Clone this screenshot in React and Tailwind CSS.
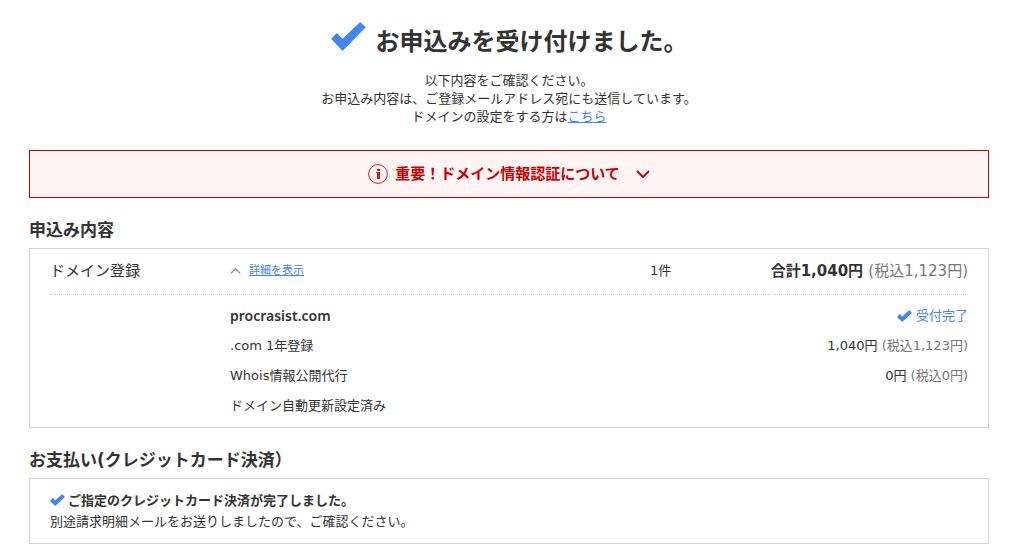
import React, { useState } from "react";

const orderItems = [
  { name: ".com 1年登録", price: "1,040円", taxPrice: "(税込1,123円)" },
  { name: "Whois情報公開代行", price: "0円", taxPrice: "(税込0円)" },
  { name: "ドメイン自動更新設定済み" },
];

const CheckIcon = ({ className }) => (
  <svg
    viewBox="0 0 104 87"
    className={className}
    fill="#4285f4"
    aria-hidden="true"
  >
    <path d="M0 50 17 33 34 50 87 0 104 16 34 87Z" />
  </svg>
);

// heavier tick, used next to small text
const SmallCheckIcon = () => (
  <svg
    viewBox="0 0 15 12"
    className="h-3 w-[15px] shrink-0"
    fill="none"
    stroke="#4285f4"
    strokeWidth="4"
    aria-hidden="true"
  >
    <path d="M1.400 5.500 5.200 9.200 13.600 1.600" />
  </svg>
);

const InfoIcon = () => (
  <svg
    viewBox="0 0 20 20"
    className="h-5 w-5 shrink-0"
    fill="none"
    aria-hidden="true"
  >
    <circle cx="10" cy="10" r="9.4" stroke="#cc1f1f" strokeWidth="1" />
    <path d="M9 5h3v2H9zM8 8h4v7H9V9H8z" fill="#cc1f1f" />
  </svg>
);

const ChevronIcon = ({ className }) => (
  <svg
    viewBox="0 0 14 8"
    className={className}
    fill="none"
    stroke="currentColor"
    strokeWidth="2"
    aria-hidden="true"
  >
    <path d="M1 1l6 6 6-6" />
  </svg>
);

const SectionTitle = ({ children }) => (
  <h2 className="mb-1.5 text-[17px] leading-6 font-bold">{children}</h2>
);

const App = () => {
  const [showDetail, setShowDetail] = useState(true);

  return (
    <main className="bg-white px-[29px] pt-[22px] pb-3 font-['DejaVu_Sans','Noto_Sans_CJK_JP',sans-serif] text-[13px] leading-[18px] text-[#333]">
      <div className="flex items-start justify-center gap-2.5">
        <CheckIcon className="h-[29px] w-[35px]" />
        <h1 className="text-2xl leading-10 font-bold">
          お申込みを受け付けました。
        </h1>
      </div>

      <p className="mt-2.5 text-center">
        以下内容をご確認ください。
        <br />
        お申込み内容は、ご登録メールアドレス宛にも送信しています。
        <br />
        ドメインの設定をする方は
        <a href="#domain" className="text-[#4285f4] underline">
          こちら
        </a>
      </p>

      <button
        type="button"
        className="mt-6 flex h-12 w-full items-center justify-center border border-[#c00] bg-[#fff5f5] text-[15px] font-bold text-[#c00]"
      >
        <InfoIcon />
        <span className="ml-[7px]">重要！ドメイン情報認証について</span>
        <ChevronIcon className="ml-4 h-2 w-3.5" />
      </button>

      <section className="mt-5">
        <SectionTitle>申込み内容</SectionTitle>
        <div className="border border-[#d3d3d3] px-5 pb-1.5">
          <table className="w-full">
            <thead>
              <tr className="h-[45px] border-b border-dotted border-[#ccc] text-left">
                <th className="w-[180px] text-[15px] font-normal">
                  ドメイン登録
                </th>
                <th className="font-normal">
                  <button
                    type="button"
                    onClick={() => setShowDetail(!showDetail)}
                    className="flex items-center gap-2 text-[11px] text-[#4285f4]"
                  >
                    <ChevronIcon className="h-1.5 w-[11px] rotate-180 text-[#999]" />
                    <span className="underline">詳細を表示</span>
                  </button>
                </th>
                <th className="w-[118px] font-normal">1件</th>
                <th className="w-[200px] text-right text-[15px] font-bold">
                  合計1,040円{" "}
                  <span className="font-normal text-[#777]">
                    (税込1,123円)
                  </span>
                </th>
              </tr>
            </thead>
            {showDetail && (
              <tbody className="before:block before:h-1.5">
                <tr className="h-[30px]">
                  <td />
                  <td className="font-['Noto_Sans'] text-sm font-semibold">
                    procrasist.com
                  </td>
                  <td colSpan={2}>
                    <div className="flex items-center justify-end gap-1 text-[#4285f4]">
                      <SmallCheckIcon />
                      受付完了
                    </div>
                  </td>
                </tr>
                {orderItems.map((item) => (
                  <tr key={item.name} className="h-[30px]">
                    <td />
                    <td>{item.name}</td>
                    <td colSpan={2} className="text-right">
                      {item.price}{" "}
                      <span className="text-[#777]">{item.taxPrice}</span>
                    </td>
                  </tr>
                ))}
              </tbody>
            )}
          </table>
        </div>
      </section>

      <section className="mt-5">
        <SectionTitle>お支払い(クレジットカード決済）</SectionTitle>
        <div className="border border-[#d3d3d3] px-5 py-[11px] leading-[21px]">
          <p className="flex items-center gap-[3px] font-bold">
            <SmallCheckIcon />
            ご指定のクレジットカード決済が完了しました。
          </p>
          <p>別途請求明細メールをお送りしましたので、ご確認ください。</p>
        </div>
      </section>
    </main>
  );
};

export default App;
